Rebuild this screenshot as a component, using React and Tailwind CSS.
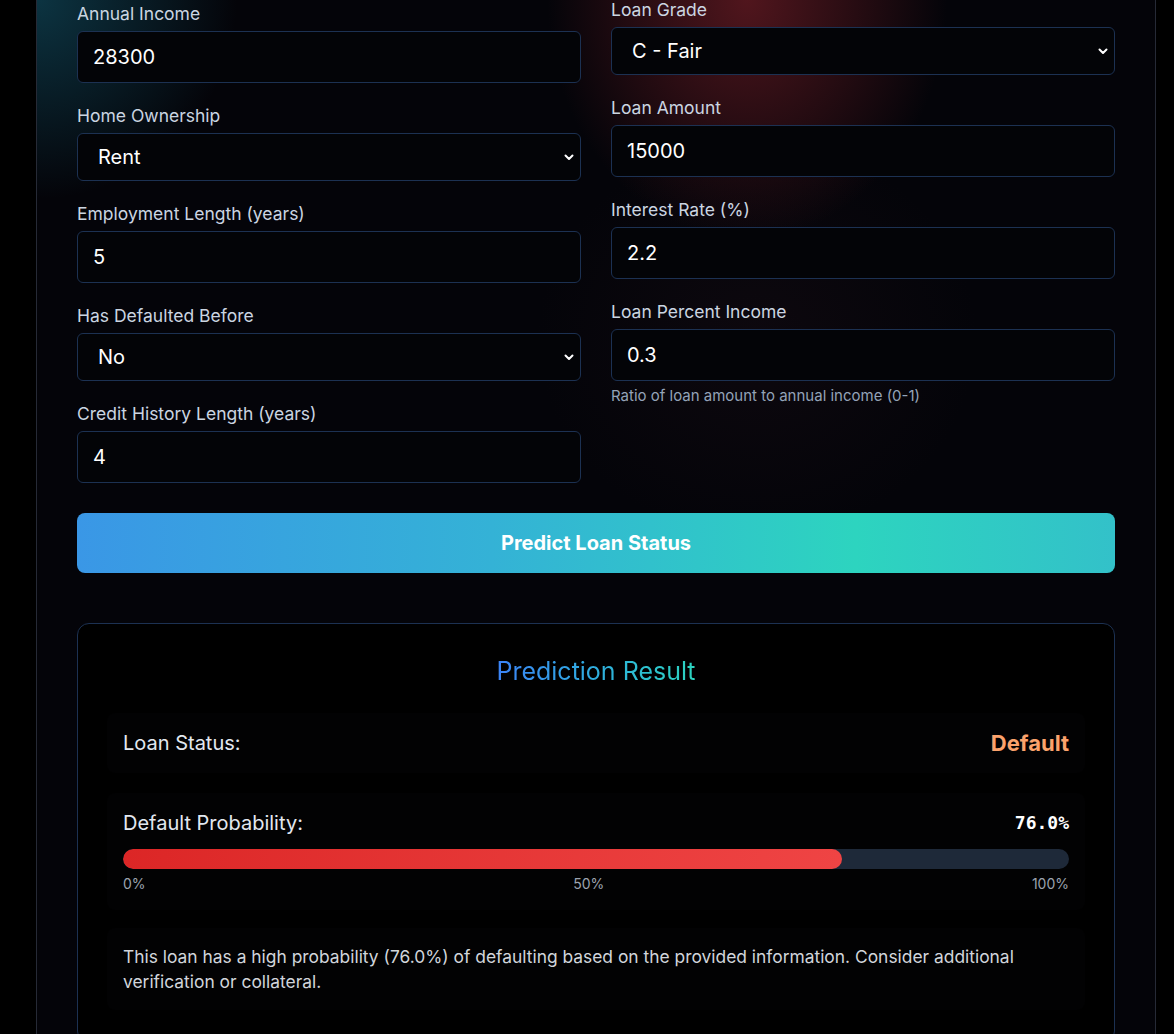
import { useState } from "react";

const fieldsLeft = [
  { label: "Age", type: "input", value: "25" },
  { label: "Annual Income", type: "input", value: "28300" },
  { label: "Home Ownership", type: "select", value: "Rent" },
  { label: "Employment Length (years)", type: "input", value: "5" },
  { label: "Has Defaulted Before", type: "select", value: "No" },
  { label: "Credit History Length (years)", type: "input", value: "4" },
];

const fieldsRight = [
  { label: "Loan Intent", type: "select", value: "Education" },
  { label: "Loan Grade", type: "select", value: "C - Fair" },
  { label: "Loan Amount", type: "input", value: "15000" },
  { label: "Interest Rate (%)", type: "input", value: "2.2" },
  {
    label: "Loan Percent Income",
    type: "input",
    value: "0.3",
    help: "Ratio of loan amount to annual income (0-1)",
  },
];

function Field({ field }) {
  const [value, setValue] = useState(field.value);

  return (
    <div className="mb-5">
      <label className="block text-[17.5px] leading-[26px] text-[#cbd5e1] mb-1">
        {field.label}
      </label>
      {field.type === "select" ? (
        <div className="relative">
          <select
            value={value}
            onChange={(e) => setValue(e.target.value)}
            className="w-full h-[48px] appearance-none rounded-md border border-[#1c3152] bg-[#030407] pl-5 pr-10 text-[20px] text-white outline-none"
          >
            <option>{field.value}</option>
          </select>
          {/* chevron */}
          <svg
            className="pointer-events-none absolute right-[6px] top-1/2 -translate-y-1/2"
            width="12"
            height="12"
            viewBox="0 0 12 12"
            fill="none"
          >
            <path
              d="M2.5 4.5L6 8L9.5 4.5"
              stroke="white"
              strokeWidth="2"
              strokeLinecap="round"
              strokeLinejoin="round"
            />
          </svg>
        </div>
      ) : (
        <input
          value={value}
          onChange={(e) => setValue(e.target.value)}
          className="w-full h-[52px] rounded-md border border-[#1c3152] bg-[#030407] px-[15px] text-[20px] text-white outline-none"
        />
      )}
      {field.help && (
        <p className="mt-[5px] text-[15px] leading-5 text-[#94a3b8]">{field.help}</p>
      )}
    </div>
  );
}

export default function App() {
  const probability = 76.0;

  return (
    <div
      className="min-h-screen overflow-hidden bg-black"
      style={{ fontFamily: "Inter, 'Noto Sans', sans-serif" }}
    >
      <div className="ml-[36px] mt-[-142px] w-[1120px] rounded-2xl border border-[#262a36] bg-[#040409] bg-[radial-gradient(ellipse_200px_240px_at_710px_140px,rgba(100,26,34,0.8),transparent),radial-gradient(ellipse_200px_200px_at_0px_140px,rgba(14,64,80,0.8),transparent),radial-gradient(ellipse_220px_200px_at_720px_480px,rgba(40,20,30,0.25),transparent)] p-10 pb-16">
        {/* Form fields */}
        <div className="grid grid-cols-2 gap-x-[30px]">
          <div className="flex flex-col">
            {fieldsLeft.map((f) => (
              <Field key={f.label} field={f} />
            ))}
          </div>
          <div className="flex flex-col">
            {fieldsRight.map((f) => (
              <Field key={f.label} field={f} />
            ))}
          </div>
        </div>

        <button className="mt-[10px] h-[60px] w-full rounded-lg bg-[linear-gradient(90deg,#3a97e6_0%,#34b2d6_40%,#2dd4bf_75%,#33c1c9_100%)] text-[20px] font-bold text-white">
          Predict Loan Status
        </button>

        {/* Result */}
        <div className="mt-[50px] rounded-xl border border-[#1c3152] bg-black px-[29px] pt-[31px] pb-8">
          <h2 className="text-center text-[25px] leading-8">
            <span className="bg-gradient-to-r from-[#3b82f6] to-[#2dd4bf] bg-clip-text text-transparent">
              Prediction Result
            </span>
          </h2>

          <div className="mt-[26px] flex items-center justify-between rounded-lg bg-[#020203] p-4">
            <span className="text-[20px] leading-7 text-[#e2e8f0]">Loan Status:</span>
            <span className="text-[22px] leading-7 font-bold text-[#fba26c]">Default</span>
          </div>

          <div className="mt-5 rounded-lg bg-[#020203] p-4">
            <div className="flex items-center justify-between">
              <span className="text-[20px] leading-7 text-[#e2e8f0]">
                Default Probability:
              </span>
              <span
                className="text-[18px] leading-7 font-bold text-white"
                style={{ fontFamily: "'DejaVu Sans Mono', monospace" }}
              >
                {probability.toFixed(1)}%
              </span>
            </div>
            <div className="mt-3 h-5 w-full overflow-hidden rounded-full bg-[#1e2939]">
              <div
                className="h-full rounded-full bg-gradient-to-r from-[#dc2626] to-[#ef4444]"
                style={{ width: `${probability}%` }}
              />
            </div>
            <div className="mt-[5px] flex justify-between text-[14px] leading-5 text-[#9ca3af]">
              <span>0%</span>
              <span>50%</span>
              <span>100%</span>
            </div>
          </div>

          <div className="mt-[18px] rounded-lg bg-[#020203] p-4 text-[17.4px] leading-[25px] text-[#d1d5db]">
            This loan has a high probability ({probability.toFixed(1)}%) of
            defaulting based on the provided information. Consider additional
            verification or collateral.
          </div>
        </div>
      </div>
    </div>
  );
}
